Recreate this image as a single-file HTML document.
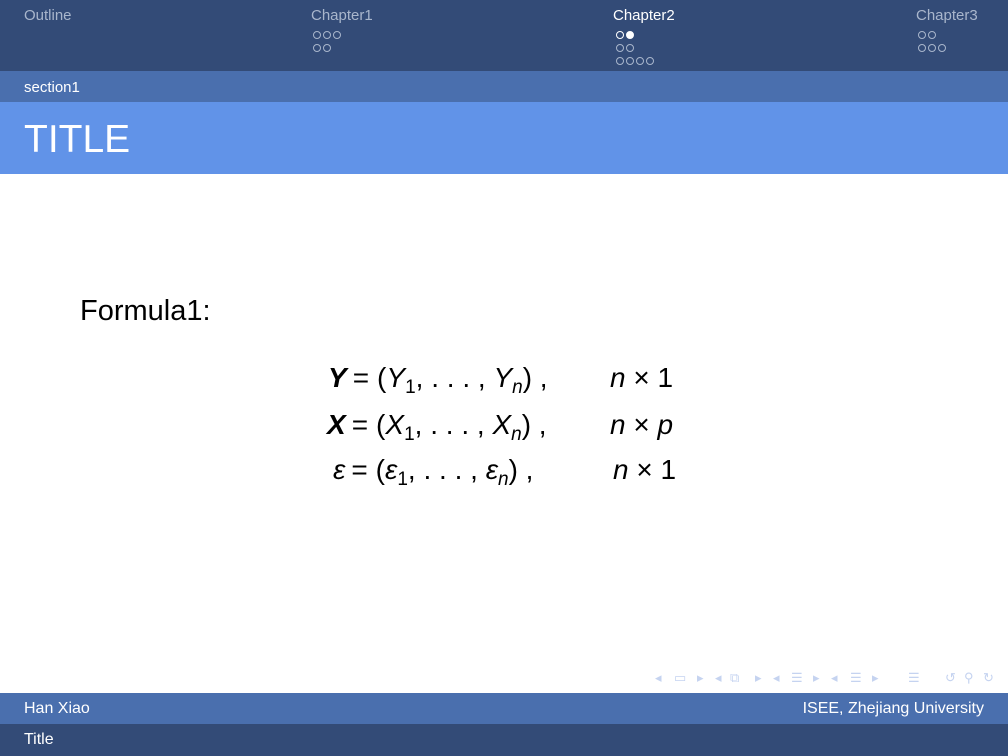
<!DOCTYPE html>
<html><head><meta charset="utf-8"><style>
*{margin:0;padding:0}
body{width:1008px;height:756px;position:relative;overflow:hidden;background:#fff;font-family:"Liberation Sans",sans-serif}
.a{position:absolute;white-space:nowrap}
.top{left:0;top:0;width:1008px;height:71px;background:#334b77}
.sec{left:0;top:71px;width:1008px;height:31px;background:#4a6fae}
.tit{left:0;top:102px;width:1008px;height:72px;background:#6193e8}
.f1{left:0;top:693px;width:1008px;height:31px;background:#4a6fae}
.f2{left:0;top:724px;width:1008px;height:32px;background:#334b77}
.nav{font-size:15px;color:#a9b6cc;top:7px}
.d{position:absolute;width:6px;height:6px;border:1px solid #a9b6cc;border-radius:50%}
.w{border-color:#fff}
.f{background:#fff;border-color:#fff}
.m{font-size:28px;color:#000;font-family:"Liberation Sans",sans-serif}
.eq{margin:0 8px 0 6px}
i{font-style:italic}
sub{font-size:19px;vertical-align:-6px}
.ic{position:absolute;top:670px;font-size:13px;color:#c5d3f0}
</style></head><body>
<div class="a top"></div><div class="a sec"></div><div class="a tit"></div>
<div class="a f1"></div><div class="a f2"></div>
<div class="a nav" style="left:24px">Outline</div>
<div class="a nav" style="left:311px">Chapter1</div>
<div class="a nav" style="left:613px;color:#fff">Chapter2</div>
<div class="a nav" style="left:916px">Chapter3</div>
<div class="d" style="left:313px;top:31px"></div><div class="d" style="left:323px;top:31px"></div><div class="d" style="left:333px;top:31px"></div>
<div class="d" style="left:313px;top:44px"></div><div class="d" style="left:323px;top:44px"></div>
<div class="d w" style="left:616px;top:31px"></div><div class="d f" style="left:626px;top:31px"></div>
<div class="d" style="left:616px;top:44px"></div><div class="d" style="left:626px;top:44px"></div>
<div class="d" style="left:616px;top:57px"></div><div class="d" style="left:626px;top:57px"></div><div class="d" style="left:636px;top:57px"></div><div class="d" style="left:646px;top:57px"></div>
<div class="d" style="left:918px;top:31px"></div><div class="d" style="left:928px;top:31px"></div>
<div class="d" style="left:918px;top:44px"></div><div class="d" style="left:928px;top:44px"></div><div class="d" style="left:938px;top:44px"></div>
<div class="a" style="left:24px;top:79px;font-size:15px;color:#fff">section1</div>
<div class="a" style="left:24px;top:118px;font-size:39px;color:#fff">TITLE</div>
<div class="a" style="left:80px;top:295px;font-size:29px;color:#000">Formula1:</div>
<div class="a m" style="left:328px;top:362px"><b><i>Y</i></b><span class="eq">=</span>(<i>Y</i><sub>1</sub>, . . . , <i>Y<sub>n</sub></i>) ,</div>
<div class="a m" style="left:610px;top:362px"><i>n</i> × 1</div>
<div class="a m" style="left:327px;top:409px"><b><i>X</i></b><span class="eq">=</span>(<i>X</i><sub>1</sub>, . . . , <i>X<sub>n</sub></i>) ,</div>
<div class="a m" style="left:610px;top:409px"><i>n</i> × <i>p</i></div>
<div class="a m" style="left:333px;top:454px"><i>ε</i><span class="eq">=</span>(<i>ε</i><sub>1</sub>, . . . , <i>ε<sub>n</sub></i>) ,</div>
<div class="a m" style="left:613px;top:454px"><i>n</i> × 1</div>
<div class="ic" style="left:655px">◂</div><div class="ic" style="left:674px">▭</div><div class="ic" style="left:697px">▸</div>
<div class="ic" style="left:715px">◂</div><div class="ic" style="left:730px">⧉</div><div class="ic" style="left:755px">▸</div>
<div class="ic" style="left:773px">◂</div><div class="ic" style="left:791px">☰</div><div class="ic" style="left:813px">▸</div>
<div class="ic" style="left:831px">◂</div><div class="ic" style="left:850px">☰</div><div class="ic" style="left:872px">▸</div>
<div class="ic" style="left:908px">☰</div>
<div class="ic" style="left:945px">↺</div><div class="ic" style="left:964px">⚲</div><div class="ic" style="left:983px">↻</div>
<div class="a" style="left:24px;top:700px;font-size:16px;color:#fff">Han Xiao</div>
<div class="a" style="right:24px;top:700px;font-size:16px;color:#fff">ISEE, Zhejiang University</div>
<div class="a" style="left:24px;top:731px;font-size:16px;color:#fff">Title</div>
</body></html>
